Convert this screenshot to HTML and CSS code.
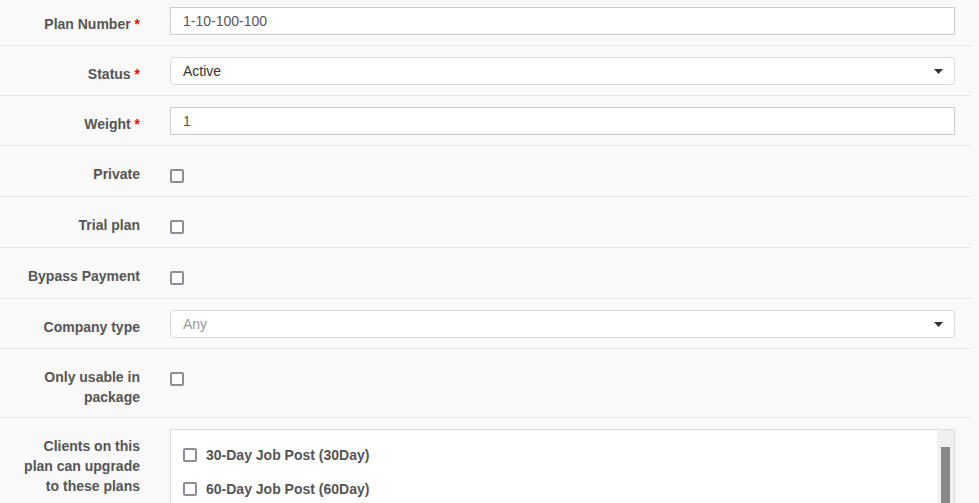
FILE: index.html
```html
<html lang="en">
<head>
    <meta charset="UTF-8">
    <meta name="viewport" content="width=device-width, initial-scale=1.0">
    <title>Edit Plan</title>
    <link rel="stylesheet" href="styles.css">
</head>
<body>
    <form class="plan-form">
        <div class="form-row">
            <label class="row-label">Plan Number <span class="req">*</span></label>
            <div class="row-control">
                <input type="text" class="text-input" value="1-10-100-100">
            </div>
        </div>
        <div class="form-row">
            <label class="row-label">Status <span class="req">*</span></label>
            <div class="row-control">
                <div class="select-box">
                    <span class="select-value">Active</span>
                    <svg class="caret" width="9" height="5" viewBox="0 0 9 5"><path d="M0 0H9L4.5 5Z" fill="#333"/></svg>
                </div>
            </div>
        </div>
        <div class="form-row">
            <label class="row-label">Weight <span class="req">*</span></label>
            <div class="row-control">
                <input type="text" class="text-input" value="1">
            </div>
        </div>
        <div class="form-row">
            <label class="row-label" for="private">Private</label>
            <div class="row-control check-control">
                <input type="checkbox" id="private" class="check">
            </div>
        </div>
        <div class="form-row">
            <label class="row-label" for="trial">Trial plan</label>
            <div class="row-control check-control">
                <input type="checkbox" id="trial" class="check">
            </div>
        </div>
        <div class="form-row">
            <label class="row-label" for="bypass">Bypass Payment</label>
            <div class="row-control check-control">
                <input type="checkbox" id="bypass" class="check">
            </div>
        </div>
        <div class="form-row">
            <label class="row-label">Company type</label>
            <div class="row-control">
                <div class="select-box">
                    <span class="select-value placeholder">Any</span>
                    <svg class="caret" width="9" height="5" viewBox="0 0 9 5"><path d="M0 0H9L4.5 5Z" fill="#333"/></svg>
                </div>
            </div>
        </div>
        <div class="form-row">
            <label class="row-label" for="package">Only usable in package</label>
            <div class="row-control check-control">
                <input type="checkbox" id="package" class="check">
            </div>
        </div>
        <div class="form-row">
            <label class="row-label">Clients on this plan can upgrade to these plans</label>
            <div class="row-control">
                <div class="plan-list">
                    <div class="plan-items">
                        <label class="plan-item"><input type="checkbox" class="check"> 30-Day Job Post (30Day)</label>
                        <label class="plan-item"><input type="checkbox" class="check"> 60-Day Job Post (60Day)</label>
                    </div>
                    <div class="scrollbar">
                        <div class="thumb"></div>
                    </div>
                </div>
            </div>
        </div>
    </form>
</body>
</html>
```

FILE: styles.css
```css
body {
    font-family: "Liberation Sans", Arial, sans-serif;
    font-size: 14px;
    margin: 0;
    background-color: #f9f9f9;
    overflow: hidden;
}
.plan-form {
    width: 970px;
    margin-top: -4px;
}
.form-row {
    display: flex;
    padding: 10px 0;
    border-bottom: 1px solid #e6e6e6;
}
.row-label {
    width: 125px;
    flex-shrink: 0;
    padding: 8px 15px 0 15px;
    text-align: right;
    font-weight: bold;
    line-height: 20px;
    color: #555;
}
.req {
    color: #f00;
}
.row-control {
    flex: 1;
    margin: 0 15px;
    padding-top: 1px;
    min-height: 28px;
}
.check-control {
    padding-top: 13px;
    min-height: 17px;
}
.text-input {
    display: block;
    width: 100%;
    height: 28px;
    box-sizing: border-box;
    margin: 0;
    padding: 0 12px;
    border: 1px solid #ccc;
    border-radius: 0;
    background-color: white;
    font-family: inherit;
    font-size: 14px;
    color: #555;
    outline: none;
}
.select-box {
    display: flex;
    justify-content: space-between;
    align-items: center;
    height: 28px;
    box-sizing: border-box;
    padding: 0 11px 0 12px;
    border: 1px solid #d9d9d9;
    border-radius: 4px;
    background-color: white;
    color: #333;
}
.placeholder {
    color: #999;
}
.caret {
    display: block;
}
.check {
    appearance: none;
    -webkit-appearance: none;
    display: block;
    width: 14px;
    height: 14px;
    margin: 0;
    box-sizing: border-box;
    border: 2px solid #8e8d98;
    border-radius: 2px;
    background-color: white;
}
.plan-list {
    display: flex;
    height: 160px;
    border: 1px solid #ddd;
    background-color: white;
}
.plan-items {
    flex: 1;
    padding: 18px 12px 0;
}
.plan-item {
    display: flex;
    align-items: center;
    gap: 9px;
    height: 14px;
    margin-bottom: 20px;
    font-weight: bold;
    color: #555;
}
.scrollbar {
    width: 17px;
    background-color: #f0f0f0;
}
.thumb {
    width: 9px;
    height: 120px;
    margin: 17px 0 0 4px;
    background-color: #878787;
}
```
